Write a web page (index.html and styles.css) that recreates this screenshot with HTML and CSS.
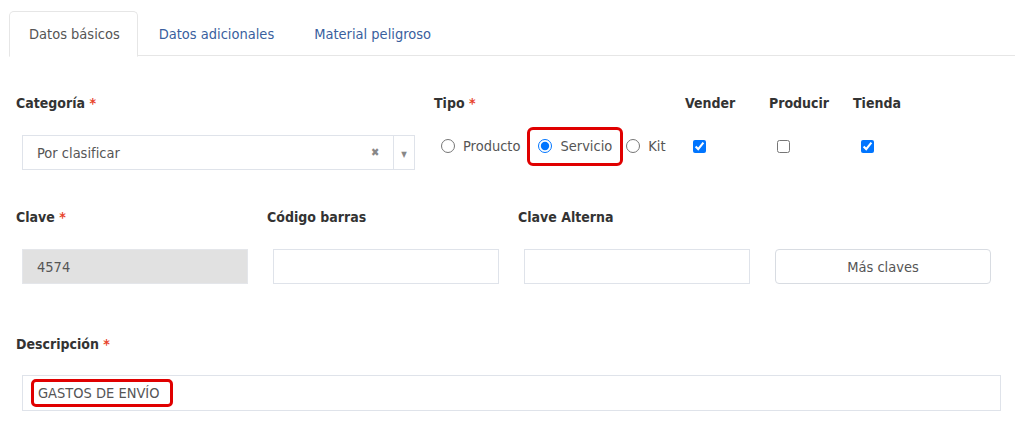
FILE: index.html
```html
<!DOCTYPE html>
<html lang="es">
<head>
  <meta charset="UTF-8" />
  <title>Producto</title>
  <link rel="stylesheet" href="styles.css">
</head>
<body>

<div class="tabs">
  <span class="tab active">Datos básicos</span>
  <span class="tab">Datos adicionales</span>
  <span class="tab">Material peligroso</span>
</div>

<div class="row row-top">
  <div class="field field-cat">
    <label>Categoría <span class="req">*</span></label>
    <div class="select">
      <span class="select-text">Por clasificar</span>
      <span class="select-clear">✖</span>
      <span class="select-arrow">▼</span>
    </div>
  </div>
  <div class="field field-tipo">
    <label>Tipo <span class="req">*</span></label>
    <div class="radios">
      <label class="radio"><input type="radio" name="tipo"> Producto</label>
      <label class="radio marked"><input type="radio" name="tipo" checked> Servicio</label>
      <label class="radio"><input type="radio" name="tipo"> Kit</label>
    </div>
  </div>
  <div class="field field-check">
    <label>Vender</label>
    <div class="check"><input type="checkbox" checked></div>
  </div>
  <div class="field field-check">
    <label>Producir</label>
    <div class="check"><input type="checkbox"></div>
  </div>
  <div class="field field-check">
    <label>Tienda</label>
    <div class="check"><input type="checkbox" checked></div>
  </div>
</div>

<div class="row row-keys">
  <div class="field">
    <label>Clave <span class="req">*</span></label>
    <input class="input readonly" type="text" value="4574" readonly>
  </div>
  <div class="field">
    <label>Código barras</label>
    <input class="input" type="text">
  </div>
  <div class="field">
    <label>Clave Alterna</label>
    <input class="input" type="text">
  </div>
  <div class="field">
    <label>&nbsp;</label>
    <button class="btn">Más claves</button>
  </div>
</div>

<div class="row row-desc">
  <div class="field field-full">
    <label>Descripción <span class="req">*</span></label>
    <div class="input input-box"><span class="marked-text">GASTOS DE ENVÍO</span></div>
  </div>
</div>

</body>
</html>
```

FILE: styles.css
```css
:root {
  --text-color: #333;
  --muted: #555;
  --link: #3a5f9e;
  --border-color: #dfe3ea;
  --mark: #e00000;
}

* {
  box-sizing: border-box;
  margin: 0;
  padding: 0;
}

body {
  font-family: "DejaVu Sans Condensed", "DejaVu Sans", sans-serif;
  font-size: 14px;
  color: var(--text-color);
  background: #fff;
  width: 1024px;
  height: 434px;
  overflow: hidden;
}

.tabs {
  display: flex;
  margin: 11px 9px 0 9px;
  border-bottom: 1px solid #e6e6e6;
  height: 45px;
}

.tab {
  display: flex;
  align-items: center;
  white-space: nowrap;
  height: 45px;
  padding: 0 19px;
  color: var(--link);
  font-size: 14.5px;
  margin-right: 2px;
}

.tab.active {
  color: var(--muted);
  background: #fff;
  border: 1px solid #e6e6e6;
  border-bottom-color: #fff;
  border-radius: 5px 5px 0 0;
  height: 46px;
  margin-bottom: -1px;
  padding: 0 17px 0 19px;
}

.row {
  display: flex;
  padding-left: 16px;
}

.field > label {
  display: block;
  font-weight: bold;
  font-size: 14px;
  height: 17px;
  line-height: 17px;
  margin-bottom: 23px;
}

.req {
  color: #e8432b;
}

.row-top {
  margin-top: 39px;
}

.field-cat {
  width: 418px;
}

.field-tipo {
  width: 251px;
}

.field-check {
  width: 84px;
}

.select {
  display: flex;
  align-items: center;
  margin-left: 6px;
  width: 393px;
  height: 35px;
  border: 1px solid var(--border-color);
  color: var(--muted);
  font-size: 14.5px;
}

.select-text {
  flex: 1;
  padding-left: 14px;
}

.select-clear {
  color: #888;
  font-size: 11px;
  width: 22px;
}

.select-arrow {
  border-left: 1px solid var(--border-color);
  height: 100%;
  width: 21px;
  display: flex;
  align-items: center;
  justify-content: center;
  font-size: 8px;
  color: #888;
  padding-top: 3px;
}

.radios {
  display: flex;
  align-items: center;
  height: 26px;
  margin-top: -2px;
}

.radio {
  display: flex;
  align-items: center;
  color: var(--muted);
  font-size: 14.5px;
  height: 39px;
  padding: 0 3px 0 0;
}

.radio:first-child {
  margin-left: 7px;
}

.radio input {
  width: 14px;
  height: 14px;
  margin: 0 8px 0 0;
}

.radio.marked {
  border: 3px solid var(--mark);
  border-radius: 6px;
  padding: 0 8px 0 8px;
  margin: 0 3px 0 4px;
}

.check {
  height: 26px;
  display: flex;
  align-items: center;
  padding-left: 8px;
  margin-top: -2px;
}

.check input {
  width: 13px;
  height: 13px;
  margin: 0;
}

.row-keys {
  margin-top: 39px;
}

.row-keys .field {
  width: 251px;
}

.input {
  display: block;
  margin-left: 6px;
  width: 226px;
  height: 35px;
  border: 1px solid var(--border-color);
  font-family: inherit;
  font-size: 14.5px;
  color: var(--muted);
  padding: 0 14px;
  background: #fff;
  outline: none;
}

.input.readonly {
  background: #e1e1e1;
  border-color: #e4e6ea;
}

.btn {
  display: block;
  margin-left: 6px;
  width: 216px;
  height: 35px;
  border: 1px solid #d8dce2;
  border-radius: 4px;
  background: #fff;
  font-family: inherit;
  font-size: 14.5px;
  color: var(--muted);
}

.row-desc {
  margin-top: 52px;
}

.row-desc .field > label {
  margin-bottom: 22px;
}

.field-full {
  width: 985px;
}

.input-box {
  width: 979px;
  height: 36px;
  display: flex;
  align-items: center;
  padding: 0 0 0 8px;
}

.marked-text {
  border: 3px solid var(--mark);
  border-radius: 5px;
  padding: 2px 11px 2px 4px;
  line-height: 18px;
}
```
